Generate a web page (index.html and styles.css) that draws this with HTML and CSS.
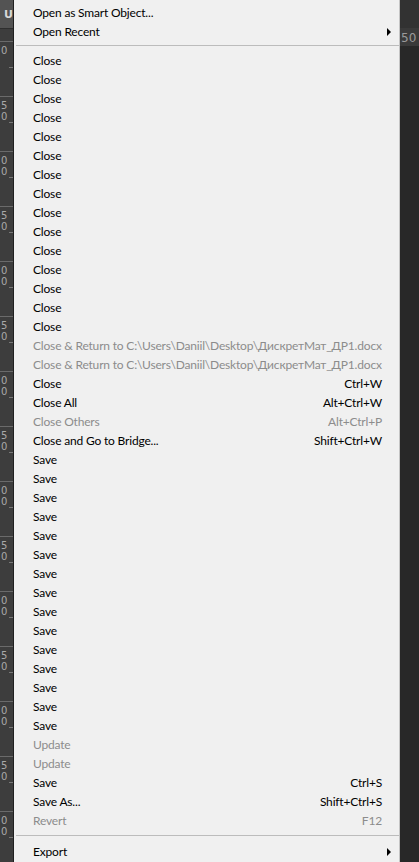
FILE: index.html
```html
<!DOCTYPE html>
<html>
<head>
<meta charset="utf-8">
<link rel="stylesheet" href="styles.css">
</head>
<body>
<div class="screen">
  <div class="ruler">
    <div class="ruler-tab">U</div>
    <div class="ruler-body">
      <div class="mark"><span>0</span></div>
      <div class="mark"><span>5</span><span>0</span></div>
      <div class="mark"><span>0</span><span>0</span></div>
      <div class="mark"><span>5</span><span>0</span></div>
      <div class="mark"><span>0</span><span>0</span></div>
      <div class="mark"><span>5</span><span>0</span></div>
      <div class="mark"><span>0</span><span>0</span></div>
      <div class="mark"><span>5</span><span>0</span></div>
      <div class="mark"><span>0</span><span>0</span></div>
      <div class="mark"><span>5</span><span>0</span></div>
      <div class="mark"><span>0</span><span>0</span></div>
      <div class="mark"><span>5</span><span>0</span></div>
      <div class="mark"><span>0</span><span>0</span></div>
      <div class="mark"><span>5</span><span>0</span></div>
      <div class="mark"><span>0</span><span>0</span></div>
    </div>
  </div>

  <div class="menu">
    <div class="item"><span class="label">Open as Smart Object...</span></div>
    <div class="item"><span class="label">Open Recent</span><span class="arrow"></span></div>
    <div class="sep sep-top"></div>
    <div class="item"><span class="label">Close</span></div>
    <div class="item"><span class="label">Close</span></div>
    <div class="item"><span class="label">Close</span></div>
    <div class="item"><span class="label">Close</span></div>
    <div class="item"><span class="label">Close</span></div>
    <div class="item"><span class="label">Close</span></div>
    <div class="item"><span class="label">Close</span></div>
    <div class="item"><span class="label">Close</span></div>
    <div class="item"><span class="label">Close</span></div>
    <div class="item"><span class="label">Close</span></div>
    <div class="item"><span class="label">Close</span></div>
    <div class="item"><span class="label">Close</span></div>
    <div class="item"><span class="label">Close</span></div>
    <div class="item"><span class="label">Close</span></div>
    <div class="item"><span class="label">Close</span></div>
    <div class="item disabled"><span class="label">Close &amp; Return to C:\Users\Daniil\Desktop\ДискретМат_ДР1.docx</span></div>
    <div class="item disabled"><span class="label">Close &amp; Return to C:\Users\Daniil\Desktop\ДискретМат_ДР1.docx</span></div>
    <div class="item"><span class="label">Close</span><span class="key">Ctrl+W</span></div>
    <div class="item"><span class="label">Close All</span><span class="key">Alt+Ctrl+W</span></div>
    <div class="item disabled"><span class="label">Close Others</span><span class="key">Alt+Ctrl+P</span></div>
    <div class="item"><span class="label">Close and Go to Bridge...</span><span class="key">Shift+Ctrl+W</span></div>
    <div class="item"><span class="label">Save</span></div>
    <div class="item"><span class="label">Save</span></div>
    <div class="item"><span class="label">Save</span></div>
    <div class="item"><span class="label">Save</span></div>
    <div class="item"><span class="label">Save</span></div>
    <div class="item"><span class="label">Save</span></div>
    <div class="item"><span class="label">Save</span></div>
    <div class="item"><span class="label">Save</span></div>
    <div class="item"><span class="label">Save</span></div>
    <div class="item"><span class="label">Save</span></div>
    <div class="item"><span class="label">Save</span></div>
    <div class="item"><span class="label">Save</span></div>
    <div class="item"><span class="label">Save</span></div>
    <div class="item"><span class="label">Save</span></div>
    <div class="item"><span class="label">Save</span></div>
    <div class="item disabled"><span class="label">Update</span></div>
    <div class="item disabled"><span class="label">Update</span></div>
    <div class="item"><span class="label">Save</span><span class="key">Ctrl+S</span></div>
    <div class="item"><span class="label">Save As...</span><span class="key">Shift+Ctrl+S</span></div>
    <div class="item disabled"><span class="label">Revert</span><span class="key">F12</span></div>
    <div class="sep sep-bottom"></div>
    <div class="item"><span class="label">Export</span><span class="arrow"></span></div>
  </div>

  <div class="side">
    <div class="side-top"></div>
    <div class="side-band">50</div>
    <div class="side-body"></div>
  </div>
</div>
</body>
</html>
```

FILE: styles.css
```css
html, body {
  margin: 0;
  padding: 0;
  background: #282828;
}

.screen {
  display: flex;
  width: 419px;
  height: 862px;
  overflow: hidden;
}

/* left ruler */
.ruler {
  width: 13px;
  flex: none;
  display: flex;
  flex-direction: column;
  background: #3d3d3d;
  border-right: 1px solid #1f1f1f;
}

.ruler-tab {
  height: 28px;
  flex: none;
  background: #535353;
  border-bottom: 1px solid #2e2e2e;
  color: #d8d8d8;
  font: bold 11px "DejaVu Sans", sans-serif;
  line-height: 30px;
  padding-left: 4px;
}

.ruler-body {
  flex: 1;
  display: flex;
  flex-direction: column;
  padding-top: 12px;
  overflow: hidden;
}

.mark {
  height: 51px;
  flex: none;
  display: flex;
  flex-direction: column;
  border-top: 1px solid #6a6a6a;
  padding-top: 3px;
  padding-left: 1px;
  color: #a9a9a9;
  font: 10px "DejaVu Sans", sans-serif;
  line-height: 11px;
  background-image: linear-gradient(#777, #777);
  background-size: 4px 1px;
  background-position: right 25px;
  background-repeat: no-repeat;
}

/* menu */
.menu {
  width: 386px;
  flex: none;
  background: #f0f0f0;
  border-right: 1px solid #c4c4c4;
  padding-top: 3px;
  box-sizing: border-box;
  font-family: Lato, "Noto Sans", sans-serif;
  font-size: 12px;
  letter-spacing: -0.18px;
  color: #000;
}

.item {
  display: flex;
  align-items: center;
  height: 19px;
  line-height: 19px;
  padding: 0 8px 0 19px;
  white-space: nowrap;
}

.item .label {
  flex: 1;
}

.item .key {
  margin-right: 9px;
}

.item.disabled {
  color: #8c8c8c;
}

.arrow {
  width: 0;
  height: 0;
  border-top: 4px solid transparent;
  border-bottom: 4px solid transparent;
  border-left: 4px solid #000;
  margin-left: auto;
}

.sep {
  height: 1px;
  background: #bcbcbc;
  margin-left: 2px;
  margin-right: 0;
}

.sep-top {
  margin-top: 4px;
  margin-bottom: 5px;
}

.sep-bottom {
  margin-top: 5px;
  margin-bottom: 6px;
}

/* right strip */
.side {
  flex: 1;
  display: flex;
  flex-direction: column;
}

.side-top {
  height: 28px;
  background: #323232;
}

.side-band {
  height: 18px;
  background: #3a3a3a;
  color: #9a9a9a;
  font: 12px "DejaVu Sans", sans-serif;
  line-height: 20px;
  padding-left: 1px;
  overflow: hidden;
}

.side-body {
  flex: 1;
  background: #282828;
}
```
